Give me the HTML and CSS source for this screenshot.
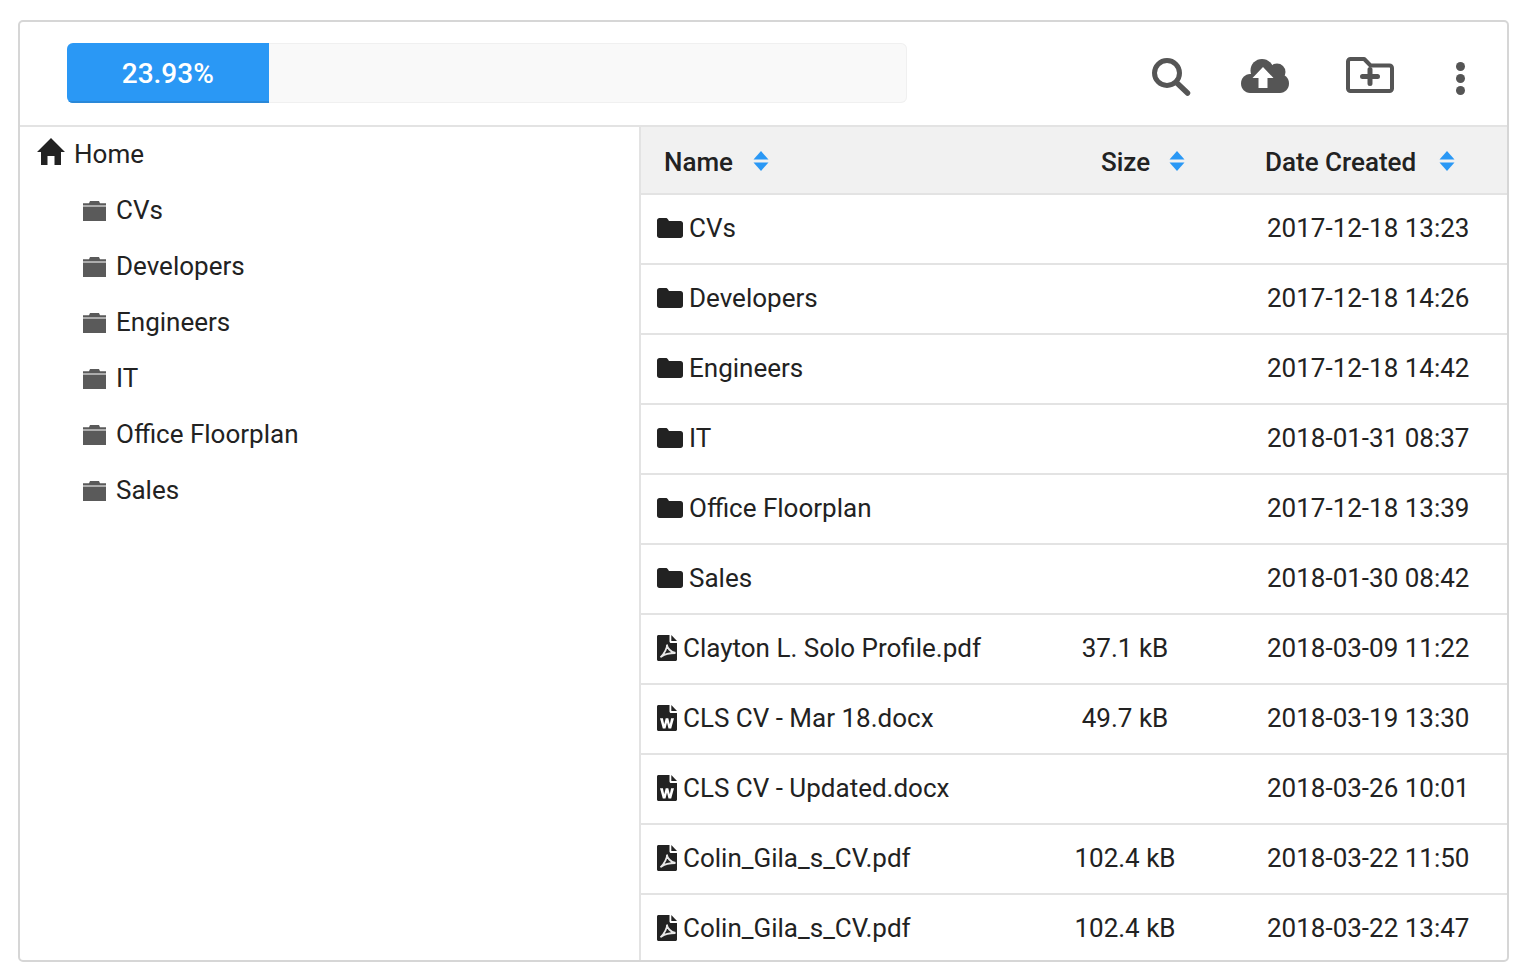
FILE: index.html
```html
<!DOCTYPE html>
<html lang="en">
<head>
<meta charset="utf-8">
<title>Files</title>
<link rel="stylesheet" href="styles.css">
</head>
<body>
<svg class="defs" width="0" height="0" aria-hidden="true">
  <defs>
    <symbol id="i-folder" viewBox="0 0 26 20"><path d="M2.500 0h6.200c1 0 1.600.4 2.200 1.200L12 3h11.500C24.900 3 26 4.100 26 5.500v12c0 1.400-1.100 2.500-2.500 2.500h-21C1.100 20 0 18.900 0 17.500v-15C0 1.100 1.100 0 2.500 0z"/></symbol>
    <symbol id="i-pdf" viewBox="0 0 20 26"><path d="M1.500 0H12.500v6.500c0 .8.700 1.500 1.500 1.500h6v16.500c0 .8-.7 1.500-1.500 1.500h-17C.7 26 0 25.300 0 24.500v-23C0 .7.700 0 1.500 0z"/><path d="M14.300 0L20 6h-5.700z"/><path class="pdf-mark" d="M10 9.500c.5 3-2.500 9-6.500 12.800M10 10c.3 3 3.500 7 8.500 8M4.500 21.500c3-2.200 8-3.500 14-3.500" fill="none"/></symbol>
    <symbol id="i-word" viewBox="0 0 20 26"><path d="M1.500 0H12.500v6.500c0 .8.700 1.500 1.500 1.500h6v16.500c0 .8-.7 1.500-1.500 1.500h-17C.7 26 0 25.300 0 24.500v-23C0 .7.700 0 1.500 0z"/><path d="M14.300 0L20 6h-5.700z"/><path class="word-mark" d="M3 13.300h2.900l1.300 6 1.500-6h2.600l1.500 6 1.300-6h2.900l-2.800 10.200h-2.700l-1.500-6-1.500 6H5.800z"/></symbol>
    <symbol id="i-tree" viewBox="0 0 23 20"><path d="M7 0h9l1 2.200h6v2.300H0V2.200h6z"/><path d="M0 5.500h23V20H0z"/></symbol>
    <symbol id="i-sort" viewBox="0 0 16 20"><path d="M8 0l7.500 8.500H.5z"/><path d="M.5 11.500h15L8 20z"/></symbol>
  </defs>
</svg>
<main class="browser">
  <header class="toolbar">
    <div class="quota"><div class="quota-fill" style="width:24%">23.93%</div></div>
    <div class="tools">
      <svg class="tool tool-search" viewBox="0 0 40 40"><circle cx="16" cy="17" r="12.500" fill="none" stroke-width="5"/><path d="M26.500 27.500l10 9.500" fill="none" stroke-width="5.500" stroke-linecap="round"/></svg>
      <svg class="tool tool-cloud" viewBox="0 0 48 34"><circle cx="21" cy="11.500" r="11.500"/><circle cx="36" cy="13" r="8.500"/><path d="M9 15h30c5 0 9 4.300 9 9.500S44 34 39 34H9c-5 0-9-4.300-9-9.500S4 15 9 15z"/><path class="tool-cut" d="M22 8L11.500 19H17.500V29H26.500V19H32.500z"/></svg>
      <svg class="tool tool-newfolder" viewBox="0 0 48 36"><path fill="none" stroke-width="4" stroke-linejoin="round" d="M2 4.500C2 3.100 3.100 2 4.500 2h13.700l6.300 6.500h19C44.900 8.500 46 9.600 46 11v20.500c0 1.400-1.100 2.500-2.500 2.500h-39C3.100 34 2 32.900 2 31.500z"/><path fill="none" stroke-width="5" stroke-linecap="round" d="M16.500 19.500h15M24 12.500v14"/></svg>
      <svg class="tool tool-more" viewBox="0 0 10 33"><circle cx="4.500" cy="4.500" r="4.500"/><circle cx="4.500" cy="16.500" r="4.500"/><circle cx="4.500" cy="28.500" r="4.500"/></svg>
    </div>
  </header>
  <div class="panes">
    <nav class="tree">
      <div class="tree-root">
        <svg class="home" viewBox="0 0 28 27"><path d="M14 0l14 14h-4v13h-6.500v-9h-7v9H4V14H0z"/></svg>
        <span>Home</span>
      </div>
      <div class="tree-item"><svg class="tree-icon"><use href="#i-tree"/></svg><span>CVs</span></div>
      <div class="tree-item"><svg class="tree-icon"><use href="#i-tree"/></svg><span>Developers</span></div>
      <div class="tree-item"><svg class="tree-icon"><use href="#i-tree"/></svg><span>Engineers</span></div>
      <div class="tree-item"><svg class="tree-icon"><use href="#i-tree"/></svg><span>IT</span></div>
      <div class="tree-item"><svg class="tree-icon"><use href="#i-tree"/></svg><span>Office Floorplan</span></div>
      <div class="tree-item"><svg class="tree-icon"><use href="#i-tree"/></svg><span>Sales</span></div>
    </nav>
    <section class="list">
      <div class="row head">
        <div class="th th-name">Name<svg class="sort"><use href="#i-sort"/></svg></div>
        <div class="th th-size">Size<svg class="sort"><use href="#i-sort"/></svg></div>
        <div class="th th-date">Date Created<svg class="sort"><use href="#i-sort"/></svg></div>
      </div>
      <div class="row"><div class="name"><svg class="ic-folder"><use href="#i-folder"/></svg>CVs</div><div class="size"></div><div class="date">2017-12-18 13:23</div></div>
      <div class="row"><div class="name"><svg class="ic-folder"><use href="#i-folder"/></svg>Developers</div><div class="size"></div><div class="date">2017-12-18 14:26</div></div>
      <div class="row"><div class="name"><svg class="ic-folder"><use href="#i-folder"/></svg>Engineers</div><div class="size"></div><div class="date">2017-12-18 14:42</div></div>
      <div class="row"><div class="name"><svg class="ic-folder"><use href="#i-folder"/></svg>IT</div><div class="size"></div><div class="date">2018-01-31 08:37</div></div>
      <div class="row"><div class="name"><svg class="ic-folder"><use href="#i-folder"/></svg>Office Floorplan</div><div class="size"></div><div class="date">2017-12-18 13:39</div></div>
      <div class="row"><div class="name"><svg class="ic-folder"><use href="#i-folder"/></svg>Sales</div><div class="size"></div><div class="date">2018-01-30 08:42</div></div>
      <div class="row"><div class="name"><svg class="ic-file"><use href="#i-pdf"/></svg>Clayton L. Solo Profile.pdf</div><div class="size">37.1 kB</div><div class="date">2018-03-09 11:22</div></div>
      <div class="row"><div class="name"><svg class="ic-file"><use href="#i-word"/></svg>CLS CV - Mar 18.docx</div><div class="size">49.7 kB</div><div class="date">2018-03-19 13:30</div></div>
      <div class="row"><div class="name"><svg class="ic-file"><use href="#i-word"/></svg>CLS CV - Updated.docx</div><div class="size"></div><div class="date">2018-03-26 10:01</div></div>
      <div class="row"><div class="name"><svg class="ic-file"><use href="#i-pdf"/></svg>Colin_Gila_s_CV.pdf</div><div class="size">102.4 kB</div><div class="date">2018-03-22 11:50</div></div>
      <div class="row"><div class="name"><svg class="ic-file"><use href="#i-pdf"/></svg>Colin_Gila_s_CV.pdf</div><div class="size">102.4 kB</div><div class="date">2018-03-22 13:47</div></div>
    </section>
  </div>
</main>
</body>
</html>
```
FILE: styles.css
```css
* { box-sizing: border-box; }
html, body { margin: 0; height: 100%; background: #fff; }
body {
  padding: 20px 24px 0 18px;
  font-family: Roboto, "Liberation Sans", sans-serif;
  font-size: 26px;
  color: #222;
  overflow: hidden;
}
.defs { position: absolute; }
.browser {
  width: 1491px;
  height: 942px;
  border: 2px solid #d6d6d6;
  border-radius: 5px;
  overflow: hidden;
  display: flex;
  flex-direction: column;
}
.toolbar {
  height: 105px;
  flex: none;
  border-bottom: 2px solid #e3e3e3;
  padding: 21px 0 0 47px;
  display: flex;
}
.quota {
  width: 840px;
  height: 60px;
  background: #f9f9f9;
  border-radius: 6px;
  box-shadow: inset 0 0 0 1px #f0f0f0;
  overflow: hidden;
}
.quota-fill {
  height: 60px;
  background: #2a98f5;
  box-shadow: inset 0 -2px 0 #2a88d8;
  color: #fff;
  font-weight: 500;
  font-size: 28px;
  line-height: 62px;
  text-align: center;
}
.tools { position: relative; flex: 1; }
.tool { position: absolute; fill: #555; stroke: #555; stroke-width: 0; }
.tool-cut { fill: #fff; }
.tool-search { left: 244px; top: 13px; width: 40px; height: 40px; }
.tool-cloud { left: 334px; top: 16px; width: 48px; height: 34px; }
.tool-newfolder { left: 439px; top: 14px; width: 48px; height: 36px; }
.tool-more { left: 549px; top: 19px; width: 10px; height: 33px; }
.panes { flex: 1; display: flex; min-height: 0; }
.tree { width: 621px; flex: none; border-right: 2px solid #e3e3e3; }
.tree-root {
  height: 56px;
  display: flex;
  align-items: center;
  gap: 9px;
  padding: 0 0 2px 17px;
}
.home { width: 28px; height: 27px; fill: #222; margin-top: -5px; }
.tree-item {
  height: 56px;
  display: flex;
  align-items: center;
  gap: 10px;
  padding: 0 0 2px 63px;
}
.tree-icon { width: 23px; height: 20px; fill: #5a5a5a; margin-top: 2px; }
.list { flex: 1; min-width: 0; }
.row {
  display: grid;
  grid-template-columns: 404px 160px 1fr;
  height: 70px;
  padding-bottom: 2px;
  border-bottom: 2px solid #e3e3e3;
  align-items: center;
}
.head {
  height: 68px;
  padding: 4px 0 0;
  background: #f1f1f1;
  font-weight: 500;
}
.th { display: flex; align-items: center; }
.th-name { padding-left: 23px; gap: 20px; }
.th-size { padding-left: 56px; gap: 19px; }
.th-date { padding-left: 60px; gap: 23px; }
.sort { width: 16px; height: 20px; fill: #2a98f5; margin-top: -2px; }
.name { display: flex; align-items: center; padding-left: 16px; white-space: nowrap; }
.ic-folder { width: 26px; height: 20px; fill: #222; margin-right: 6px; }
.ic-file { width: 20px; height: 26px; fill: #222; margin-right: 6px; }
.pdf-mark { stroke: #e8e8e8; stroke-width: 1.800; }
.word-mark { fill: #fff; }
.size { text-align: center; }
.date { padding-left: 62px; white-space: nowrap; }
```
